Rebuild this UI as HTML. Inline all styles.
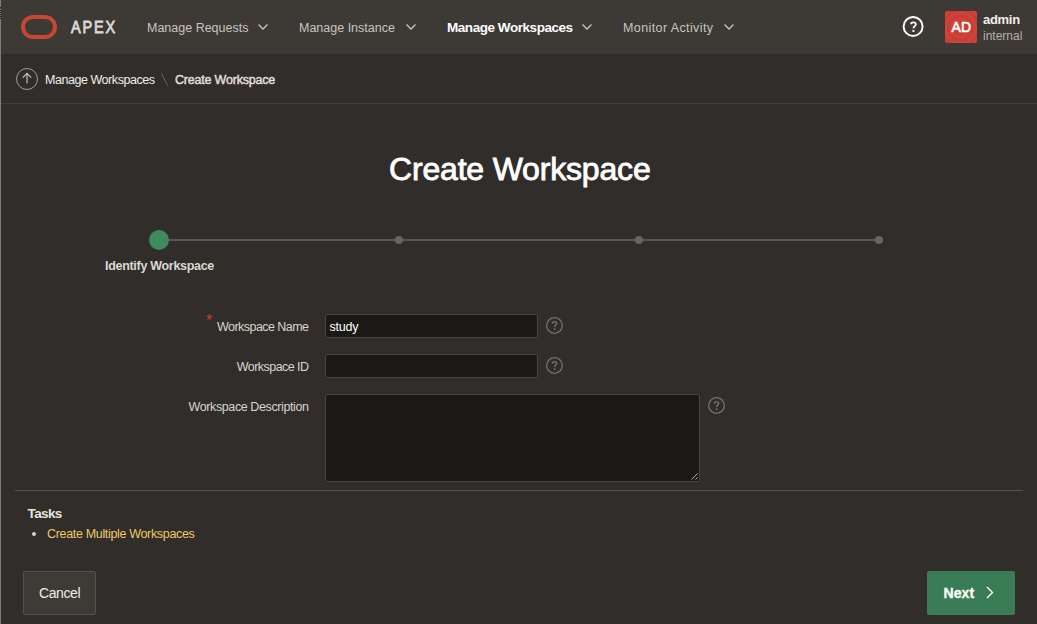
<!DOCTYPE html>
<html>
<head>
<meta charset="utf-8">
<style>
*{box-sizing:border-box;margin:0;padding:0}
html,body{width:1037px;height:624px;overflow:hidden}
body{background:#312d2a;font-family:"Liberation Sans",sans-serif;position:relative;color:#e6e3df}
.t{position:absolute;white-space:nowrap;line-height:1}
.abs{position:absolute}
#edge{position:absolute;left:0;top:0;width:1px;height:624px;background:#7d7d7d}
#hdr{position:absolute;left:0;top:0;width:1037px;height:54px;background:#3d3935}
#crumb{position:absolute;left:0;top:54px;width:1037px;height:50px;background:#312d2a;border-bottom:1px solid #403c38}
.nav{font-size:12.5px;color:#c9c5c0;top:22.4px}
.chev{position:absolute;width:10px;height:6px}
.lbl{font-size:12.5px;color:#d8d4cf;text-align:right;right:728.5px}
.inp{position:absolute;background:#1a1917;border:1px solid #4a4541;border-radius:2px}
.help{position:absolute}
</style>
</head>
<body>
<div id="hdr"></div>
<div id="crumb"></div>
<div id="edge"></div>
<svg class="abs" style="left:0;top:0" width="1" height="30"><g fill="#1e1e1e"><rect x="0" y="7" width="1" height="1.5"/><rect x="0" y="10" width="1" height="1"/><rect x="0" y="12" width="1" height="1"/><rect x="0" y="14" width="1" height="1"/><rect x="0" y="16" width="1" height="1"/><rect x="0" y="18" width="1" height="1"/></g></svg>

<!-- logo -->
<svg class="abs" style="left:21px;top:15px" width="36" height="24" viewBox="0 0 36 24">
  <rect x="2" y="2" width="32" height="20" rx="10" ry="10" fill="none" stroke="#c74634" stroke-width="4"/>
</svg>
<div class="t" style="left:70.5px;top:19px;font-size:16.5px;color:#dcd9d5;-webkit-text-stroke:0.8px #dcd9d5;letter-spacing:2.1px;transform:scaleX(0.88);transform-origin:0 0">APEX</div>

<!-- nav -->
<div class="t nav" style="left:147px">Manage Requests</div>
<svg class="chev" style="left:258px;top:24px" viewBox="0 0 10 6"><path d="M0.5 0.5 L5 5 L9.5 0.5" fill="none" stroke="#c9c5c0" stroke-width="1.3"/></svg>
<div class="t nav" style="left:299px">Manage Instance</div>
<svg class="chev" style="left:406px;top:24px" viewBox="0 0 10 6"><path d="M0.5 0.5 L5 5 L9.5 0.5" fill="none" stroke="#c9c5c0" stroke-width="1.3"/></svg>
<div class="t nav" style="left:447px;top:21.4px;font-weight:700;color:#ffffff;font-size:13.5px;letter-spacing:-0.45px">Manage Workspaces</div>
<svg class="chev" style="left:582px;top:24px" viewBox="0 0 10 6"><path d="M0.5 0.5 L5 5 L9.5 0.5" fill="none" stroke="#c9c5c0" stroke-width="1.3"/></svg>
<div class="t nav" style="left:623px;letter-spacing:0.4px">Monitor Activity</div>
<svg class="chev" style="left:724px;top:24px" viewBox="0 0 10 6"><path d="M0.5 0.5 L5 5 L9.5 0.5" fill="none" stroke="#c9c5c0" stroke-width="1.3"/></svg>

<!-- help -->
<svg class="abs" style="left:902px;top:15px" width="23" height="23" viewBox="0 0 23 23">
  <circle cx="11.1" cy="11.45" r="9.5" fill="none" stroke="#ffffff" stroke-width="1.9"/>
  <path d="M9 9.3 C9 8.1 10 7.4 11.4 7.4 C12.8 7.4 13.9 8.2 13.9 9.4 C13.9 10.9 11.4 11.3 11.4 13.5" fill="none" stroke="#ffffff" stroke-width="1.8"/>
  <rect x="10.4" y="15" width="2" height="1.9" fill="#ffffff"/>
</svg>

<!-- avatar -->
<div class="abs" style="left:945px;top:11px;width:32px;height:32px;background:#d0433a;border-radius:2px;overflow:hidden"><svg width="32" height="32" viewBox="0 0 32 32"><g fill="none" stroke="#b8352c" stroke-opacity="0.35" stroke-width="2.5"><circle cx="15.5" cy="17" r="6"/><circle cx="15.5" cy="17" r="12"/><circle cx="15.5" cy="17" r="18"/></g></svg></div>
<div class="t" style="left:951.5px;top:20.2px;font-size:14px;color:#fff;-webkit-text-stroke:0.6px #fff;letter-spacing:0.2px">AD</div>
<div class="t" style="left:983px;top:13px;font-size:13px;font-weight:700;color:#f2f0ed;letter-spacing:-0.3px">admin</div>
<div class="t" style="left:983px;top:29.8px;font-size:12px;color:#b5b1ab">internal</div>

<!-- breadcrumb -->
<svg class="abs" style="left:16px;top:68px" width="22" height="22" viewBox="0 0 22 22">
  <circle cx="11" cy="11" r="10.5" fill="none" stroke="#8ea3a2" stroke-width="1"/>
  <path d="M11 15.3 L11 5.6 M6.8 9.6 L11 5.4 L15.2 9.6" fill="none" stroke="#c8c2ba" stroke-width="1.2"/>
</svg>
<div class="t" style="left:45px;top:74.4px;font-size:12.5px;color:#f0eeea;letter-spacing:-0.45px">Manage Workspaces</div>
<svg class="abs" style="left:161px;top:73px" width="7" height="13" viewBox="0 0 7 13"><path d="M0.5 0.5 L6.5 12.5" stroke="#6b6560" stroke-width="1"/></svg>
<div class="t" style="left:175px;top:74.4px;font-size:12.5px;color:#e2dfdb;letter-spacing:-0.2px;-webkit-text-stroke:0.45px #e2dfdb">Create Workspace</div>

<!-- title -->
<div class="t" style="left:389px;top:153.4px;font-size:32px;color:#ffffff;-webkit-text-stroke:0.85px #fff;letter-spacing:-0.18px">Create Workspace</div>

<!-- stepper -->
<div class="abs" style="left:159px;top:239px;width:720px;height:2px;background:#5b5650"></div>
<div class="abs" style="left:149px;top:230px;width:20px;height:20px;border-radius:50%;background:#3e8b5e"></div>
<div class="abs" style="left:395px;top:236px;width:8px;height:8px;border-radius:50%;background:#6b6560"></div>
<div class="abs" style="left:635px;top:236px;width:8px;height:8px;border-radius:50%;background:#6b6560"></div>
<div class="abs" style="left:875px;top:236px;width:8px;height:8px;border-radius:50%;background:#6b6560"></div>
<div class="t" style="left:105px;top:260.4px;font-size:12.5px;font-weight:700;color:#dcd8d3;letter-spacing:-0.3px">Identify Workspace</div>

<!-- form -->
<div class="t" style="left:206px;top:313px;font-size:16px;color:#d63b25">*</div>
<div class="t lbl" style="top:321.4px;letter-spacing:-0.55px">Workspace Name</div>
<div class="inp" style="left:325px;top:314px;width:213px;height:24px"></div>
<div class="t" style="left:329.5px;top:321.4px;font-size:12.5px;color:#ffffff;letter-spacing:-0.2px">study</div>

<div class="t lbl" style="top:361.4px;letter-spacing:-0.55px">Workspace ID</div>
<div class="inp" style="left:325px;top:354px;width:213px;height:24px"></div>

<div class="t lbl" style="top:401.4px;letter-spacing:-0.4px">Workspace Description</div>
<div class="inp" style="left:325px;top:394px;width:375px;height:88px"></div>
<svg class="abs" style="left:689px;top:471px" width="10" height="10" viewBox="0 0 10 10"><path d="M2.5 8.6 L8.7 2.4 M6.5 8.6 L8.7 6.4" stroke="#bdb8b2" stroke-width="1"/></svg>

<svg class="help" style="left:546px;top:317px" width="17" height="17" viewBox="0 0 17 17">
  <circle cx="8.5" cy="8.5" r="7.8" fill="none" stroke="#76716b" stroke-width="1.3"/>
  <path d="M6.4 6.8 C6.4 5.5 7.3 4.7 8.5 4.7 C9.7 4.7 10.6 5.5 10.6 6.6 C10.6 8 8.6 8.1 8.6 9.9" fill="none" stroke="#7d7872" stroke-width="1.3"/>
  <circle cx="8.6" cy="12.2" r="0.85" fill="#7d7872"/>
</svg>
<svg class="help" style="left:546px;top:357px" width="17" height="17" viewBox="0 0 17 17">
  <circle cx="8.5" cy="8.5" r="7.8" fill="none" stroke="#76716b" stroke-width="1.3"/>
  <path d="M6.4 6.8 C6.4 5.5 7.3 4.7 8.5 4.7 C9.7 4.7 10.6 5.5 10.6 6.6 C10.6 8 8.6 8.1 8.6 9.9" fill="none" stroke="#7d7872" stroke-width="1.3"/>
  <circle cx="8.6" cy="12.2" r="0.85" fill="#7d7872"/>
</svg>
<svg class="help" style="left:708px;top:397px" width="17" height="17" viewBox="0 0 17 17">
  <circle cx="8.5" cy="8.5" r="7.8" fill="none" stroke="#76716b" stroke-width="1.3"/>
  <path d="M6.4 6.8 C6.4 5.5 7.3 4.7 8.5 4.7 C9.7 4.7 10.6 5.5 10.6 6.6 C10.6 8 8.6 8.1 8.6 9.9" fill="none" stroke="#7d7872" stroke-width="1.3"/>
  <circle cx="8.6" cy="12.2" r="0.85" fill="#7d7872"/>
</svg>

<!-- divider -->
<div class="abs" style="left:15px;top:490px;width:1008px;height:1px;background:#57524d"></div>

<!-- tasks -->
<div class="t" style="left:27.5px;top:506.5px;font-size:13.5px;font-weight:700;color:#e6e3df;letter-spacing:-0.6px">Tasks</div>
<div class="abs" style="left:31.7px;top:531.7px;width:4.5px;height:4.5px;border-radius:50%;background:#d5d1cc"></div>
<div class="t" style="left:47px;top:528.4px;font-size:12.5px;color:#f0c964;letter-spacing:-0.33px">Create Multiple Workspaces</div>

<!-- buttons -->
<div class="abs" style="left:23px;top:571px;width:73px;height:44px;background:#3e3a36;border:1px solid #57524d;border-radius:2px"></div>
<div class="t" style="left:39px;top:586.2px;font-size:14px;color:#f0eeea;letter-spacing:-0.4px">Cancel</div>
<div class="abs" style="left:927px;top:571px;width:88px;height:44px;background:#3a7c55;border-radius:2px"></div>
<div class="t" style="left:943.5px;top:586.2px;font-size:14px;font-weight:700;color:#ffffff;letter-spacing:0.1px;-webkit-text-stroke:0.3px #fff">Next</div>
<svg class="abs" style="left:986px;top:586px" width="8" height="13" viewBox="0 0 8 13"><path d="M1 1 L6.5 6.5 L1 12" fill="none" stroke="#ffffff" stroke-width="1.4"/></svg>
</body>
</html>
